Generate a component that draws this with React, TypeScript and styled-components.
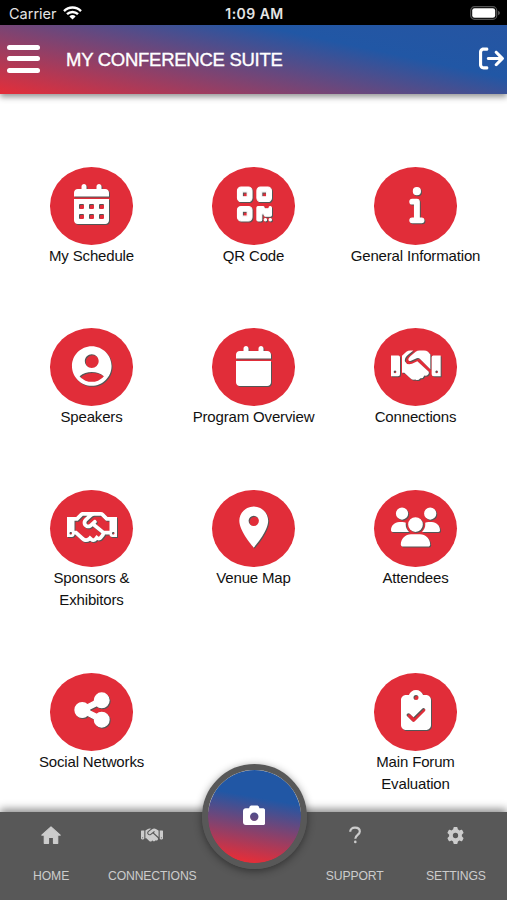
import React from "react";
import styled, { createGlobalStyle } from "styled-components";
import { FaRegHandshake } from "react-icons/fa";
import {
  FaArrowRightFromBracket,
  FaCalendar,
  FaCalendarDays,
  FaCamera,
  FaClipboardCheck,
  FaGear,
  FaHandshake,
  FaInfo,
  FaQrcode,
  FaShareNodes,
  FaUsers,
} from "react-icons/fa6";
import { MdAccountCircle, MdLocationOn } from "react-icons/md";

const GlobalStyle = createGlobalStyle`
  * { box-sizing: border-box; }
  body { margin: 0; background: #fff; font-family: "Liberation Sans", Arial, sans-serif; }
`;

const Screen = styled.div`
  width: 507px;
  height: 900px;
  display: flex;
  flex-direction: column;
  overflow: hidden;
  background: #fff;
`;

const StatusBar = styled.div`
  height: 25px;
  flex: none;
  display: grid;
  grid-template-columns: 1fr auto 1fr;
  align-items: center;
  padding: 2px 7px 0 9px;
  background: #000;
  color: #e4e4e4;
  font: 400 14.5px/20px Inter, sans-serif;
`;

const Carrier = styled.div`
  display: flex;
  align-items: center;
  gap: 6px;
  svg { margin-top: -2px; }
`;

const Clock = styled.div`
  font-weight: 600;
  font-size: 14px;
  letter-spacing: 0.45px;
`;

const BatterySlot = styled.div`
  display: flex;
  justify-content: flex-end;
  margin-top: -2px;
`;

const Header = styled.header`
  height: 69px;
  flex: none;
  display: flex;
  align-items: center;
  padding: 0 3px 2px 7px;
  background: linear-gradient(12deg, #e42e39 0%, #2157a5 70%, #2655a2 100%);
  box-shadow: 0 3px 6px rgba(0, 0, 0, 0.42);
  color: #fff;
`;

const MenuButton = styled.button`
  width: 33px;
  height: 28px;
  padding: 0;
  border: 0;
  background: none;
  display: flex;
  flex-direction: column;
  justify-content: space-between;
`;

const MenuLine = styled.span`
  height: 5px;
  border-radius: 3px;
  background: #fff;
`;

const Title = styled.h1`
  margin: 2px 0 0 26px;
  flex: 1;
  white-space: nowrap;
  font-weight: 400;
  font-size: 18.5px;
  line-height: 24px;
  letter-spacing: -0.27px;
  -webkit-text-stroke: 0.35px #fff;
`;

const Grid = styled.main`
  flex: 1;
  display: grid;
  grid-template-columns: repeat(3, 162px);
  justify-content: center;
  align-content: start;
  row-gap: 61.9px;
  padding-top: 73px;
`;

const Tile = styled.div<{ $column?: number }>`
  display: flex;
  flex-direction: column;
  align-items: center;
  ${(p) => p.$column && `grid-column: ${p.$column};`}
`;

const Disc = styled.div<{ $width: number; $stroke?: number }>`
  width: 83px;
  height: 77.5px;
  border-radius: 50%;
  display: flex;
  align-items: center;
  justify-content: center;
  padding-bottom: 3px;
  background: #e12d39;
  color: #fff;
  svg {
    flex: none;
    width: ${(p) => p.$width}px;
    height: 50px;
    overflow: visible;
    stroke-width: ${(p) => p.$stroke ?? 0};
    stroke-linejoin: round;
    filter: drop-shadow(1px 1px 0.5px #555);
  }
`;

const Label = styled.div`
  text-align: center;
  white-space: pre-line;
  font-size: 15px;
  line-height: 22px;
  letter-spacing: -0.16px;
  color: #111;
`;

const Footer = styled.nav`
  position: relative;
  height: 88px;
  flex: none;
  display: grid;
  grid-template-columns: repeat(5, 101.2px);
  justify-content: center;
  background: #585858;
  box-shadow: 0 -3px 8px rgba(0, 0, 0, 0.45);
`;

const NavItem = styled.div<{ $column: number }>`
  grid-column: ${(p) => p.$column};
  display: flex;
  flex-direction: column;
  align-items: center;
  color: #ccc;
  font-size: 12.2px;
  line-height: 18px;
`;

const NavIcon = styled.div`
  height: 46px;
  display: flex;
  align-items: center;
  justify-content: center;
`;

const NavLabel = styled.span`
  margin-top: 9px;
  white-space: nowrap;
  letter-spacing: -0.13px;
`;

const CameraButton = styled.button`
  position: absolute;
  left: 201.5px;
  top: -48.5px;
  width: 105px;
  height: 105px;
  padding: 0 0 2px;
  border: 6px solid #585858;
  border-radius: 50%;
  display: flex;
  align-items: center;
  justify-content: center;
  background: linear-gradient(10deg, #e42e39 8%, #2157a5 68%) padding-box;
  box-shadow: 0 2px 8px rgba(0, 0, 0, 0.45);
  color: #fff;
`;

const HandshakeIcon = () => (
  <svg viewBox="124 102 150 97">
    <g fill="#fff">
      <path fillRule="evenodd" d="M124 119H146q5 0 5 5V175q0 6-6 6H124ZM136 164a4 4 0 1 0 .1 0Z" />
      <path fillRule="evenodd" d="M273 119H251q-5 0-5 5V175q0 6 6 6H273ZM261 164a4 4 0 1 0 .1 0Z" />
      <path d="M157 120L170 108Q175 104 182 104H191L177 115Q163 126 166 137Q172 149 187 144L203 136L234 165Q240 169 236 175Q231 181 224 179Q221 188 212 187Q205 196 197 191Q188 193 182 187L164 171H157Z" />
      <path d="M242 160L212 130Q207 125 201 127L184 135Q177 137 176 132Q175 127 182 121L198 108Q203 104 210 104H223Q230 104 235 108L242 116Z" />
    </g>
  </svg>
);

const tiles = [
  { label: "My Schedule", icon: <FaCalendarDays />, width: 35 },
  { label: "QR Code", icon: <FaQrcode viewBox="-6 0 448 512" />, width: 34, stroke: 14 },
  { label: "General Information", icon: <FaInfo viewBox="-12 0 192 512" />, width: 14, stroke: 16 },
  { label: "Speakers", icon: <MdAccountCircle />, width: 47.5 },
  { label: "Program Overview", icon: <FaCalendar />, width: 35 },
  { label: "Connections", icon: <HandshakeIcon />, width: 50 },
  { label: "Sponsors &\nExhibitors", icon: <FaRegHandshake />, width: 50 },
  { label: "Venue Map", icon: <MdLocationOn />, width: 49.5 },
  { label: "Attendees", icon: <FaUsers />, width: 49 },
  { label: "Social Networks", icon: <FaShareNodes />, width: 34, stroke: 18 },
  { label: "Main Forum\nEvaluation", icon: <FaClipboardCheck />, width: 30, column: 3 },
];

const QuestionIcon = () => (
  <svg width="14" height="18" viewBox="0 0 14 18" fill="none" stroke="#ccc" strokeWidth="2.2">
    <path d="M2.2 5.8C2.2 3.2 4.1 1.7 7 1.7s4.8 1.5 4.8 3.8c0 1.7-1.1 2.5-2.4 3.6C7.9 10.3 7.3 10.9 7.3 12.8" />
    <circle cx="7.3" cy="15.9" r="1.3" fill="#ccc" stroke="none" />
  </svg>
);

const HomeIcon = () => (
  <svg width="20" height="18" viewBox="0 0 20 18" fill="#ccc" stroke="#ccc" strokeWidth="1.2" strokeLinejoin="round">
    <path d="M10 .9 19.2 9.1H16.7V17.3H12.5V11.5H7.5V17.3H3.3V9.1H.8Z" />
  </svg>
);

const navItems = [
  { label: "HOME", icon: <HomeIcon />, column: 1 },
  { label: "CONNECTIONS", icon: <FaHandshake size={22} />, column: 2 },
  { label: "SUPPORT", icon: <QuestionIcon />, column: 4 },
  { label: "SETTINGS", icon: <FaGear size={17} />, column: 5 },
];

const WifiIcon = () => (
  <svg width="19" height="14" viewBox="0 0 19 14" fill="none" stroke="#fff" strokeWidth="2.4">
    <path d="M1 5.1a12 12 0 0 1 17 0" />
    <path d="M4 8.2a7.8 7.8 0 0 1 11 0" />
    <path d="M9.5 13.6 6.4 10.4a4.4 4.4 0 0 1 6.2 0Z" fill="#fff" stroke="none" />
  </svg>
);

const BatteryIcon = () => (
  <svg width="30" height="14" viewBox="0 0 30 14">
    <rect x="0.7" y="0.7" width="26" height="12.6" rx="3.8" fill="none" stroke="#555" strokeWidth="1.2" />
    <rect x="2.2" y="2.2" width="23" height="9.6" rx="2.3" fill="#fff" />
    <path d="M28 4.8q2 .7 2 2.2t-2 2.2Z" fill="#555" />
  </svg>
);

export default function App() {
  return (
    <Screen>
      <GlobalStyle />
      <StatusBar>
        <Carrier>Carrier <WifiIcon /></Carrier>
        <Clock>1:09 AM</Clock>
        <BatterySlot><BatteryIcon /></BatterySlot>
      </StatusBar>
      <Header>
        <MenuButton aria-label="Menu"><MenuLine /><MenuLine /><MenuLine /></MenuButton>
        <Title>MY CONFERENCE SUITE</Title>
        <FaArrowRightFromBracket size={25} />
      </Header>
      <Grid>
        {tiles.map((t) => (
          <Tile key={t.label} $column={t.column}>
            <Disc $width={t.width} $stroke={t.stroke}>{t.icon}</Disc>
            <Label>{t.label}</Label>
          </Tile>
        ))}
      </Grid>
      <Footer>
        {navItems.map((n) => (
          <NavItem key={n.label} $column={n.column}>
            <NavIcon>{n.icon}</NavIcon>
            <NavLabel>{n.label}</NavLabel>
          </NavItem>
        ))}
        <CameraButton aria-label="Camera"><FaCamera size={22.5} /></CameraButton>
      </Footer>
    </Screen>
  );
}
